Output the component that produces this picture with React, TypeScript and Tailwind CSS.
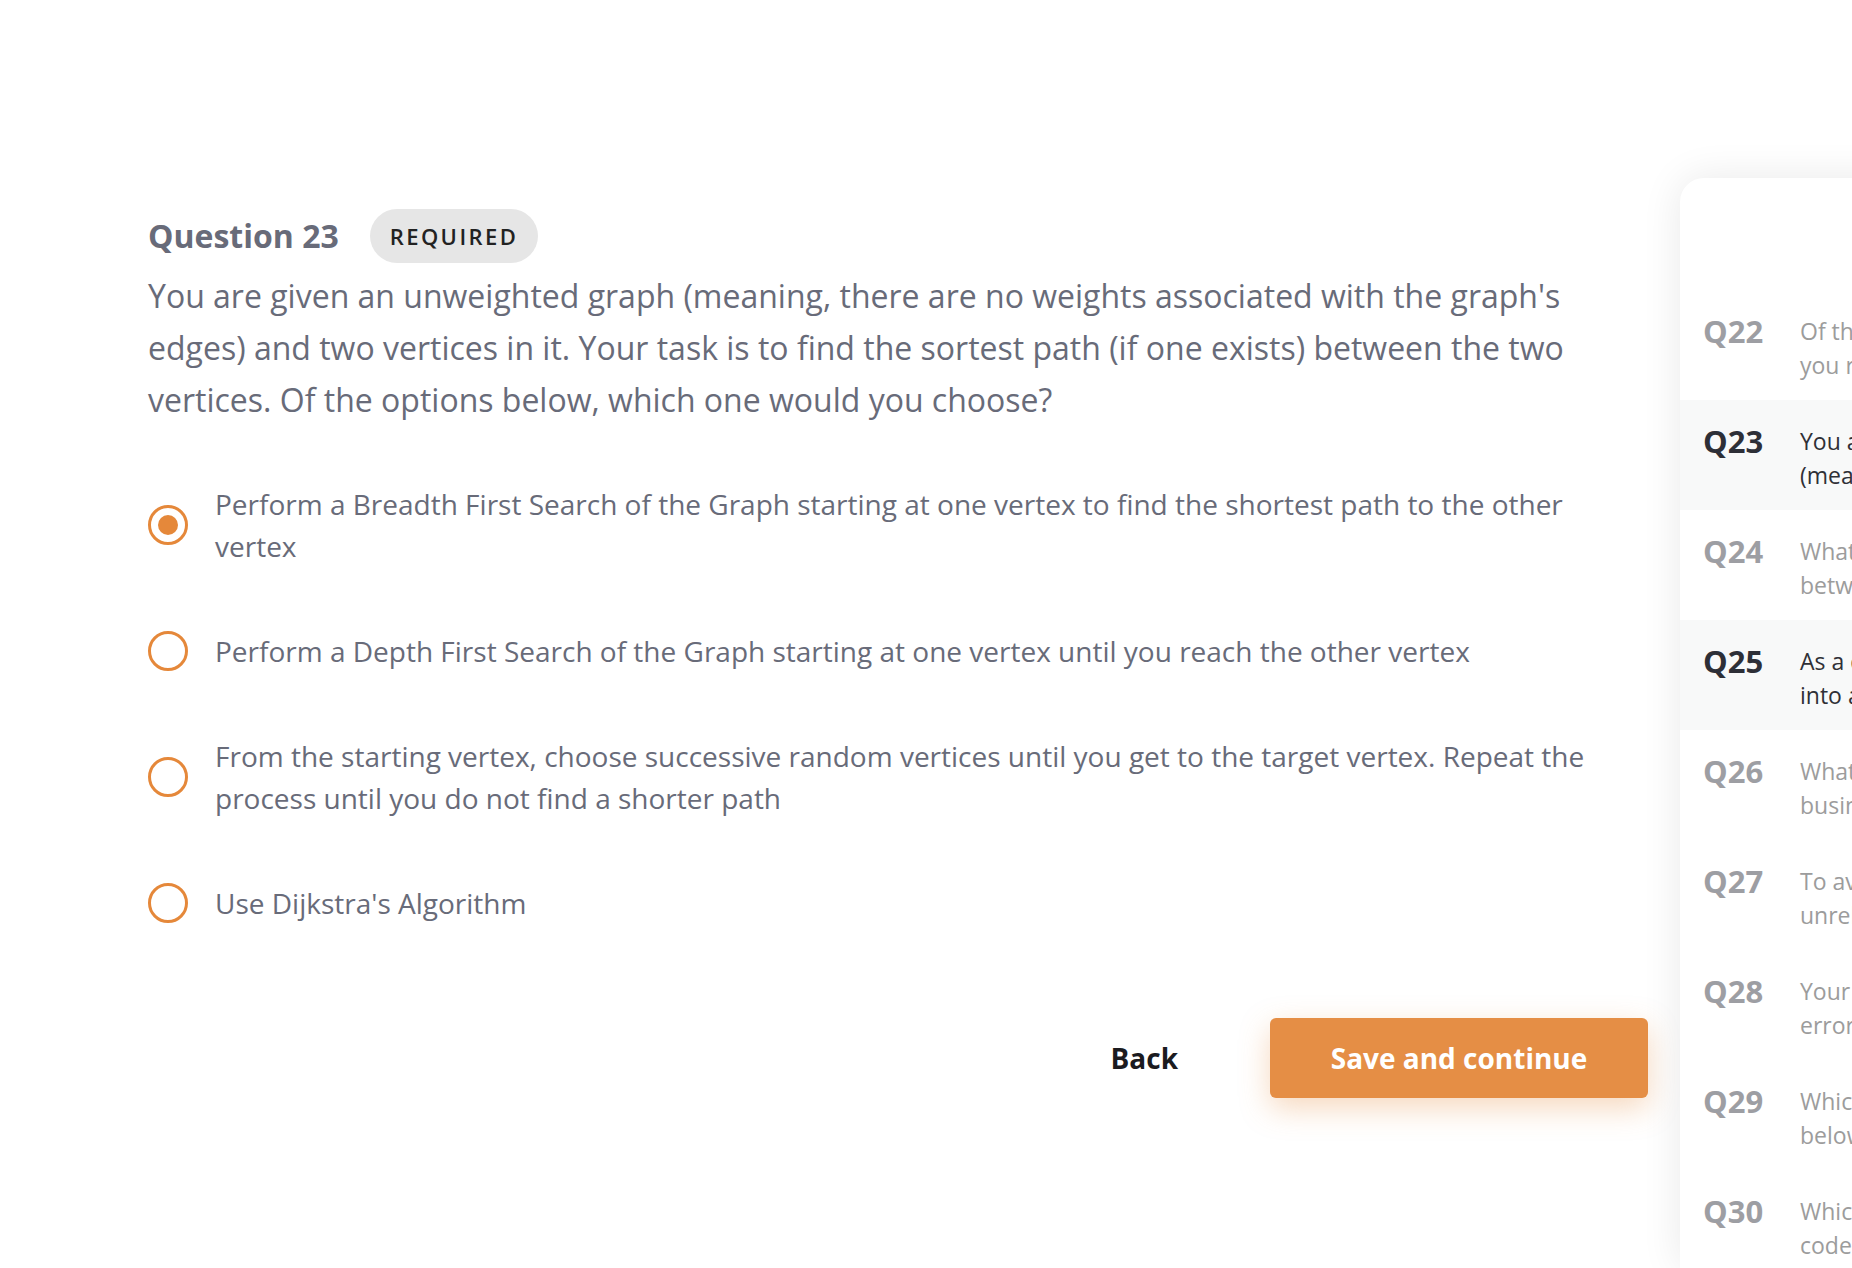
const options = [
  "Perform a Breadth First Search of the Graph starting at one vertex to find the shortest path to the other vertex",
  "Perform a Depth First Search of the Graph starting at one vertex until you reach the other vertex",
  "From the starting vertex, choose successive random vertices until you get to the target vertex. Repeat the process until you do not find a shorter path",
  "Use Dijkstra's Algorithm",
];

const questions = [
  { n: 22, l1: "Of the following approaches, which one would", l2: "you recommend to a new team member?", active: false },
  { n: 23, l1: "You are given an unweighted graph", l2: "(meaning, there are no weights associated", active: true },
  { n: 24, l1: "What is the main difference", l2: "between a process and a thread?", active: false },
  { n: 25, l1: "As a developer, you are asked to look", l2: "into a slow running query", active: true },
  { n: 26, l1: "What would you do if a critical", l2: "business requirement changes late?", active: false },
  { n: 27, l1: "To avoid a deadlock between two", l2: "unrelated services, you should", active: false },
  { n: 28, l1: "Your application throws an intermittent", l2: "error in production. What first?", active: false },
  { n: 29, l1: "Which of the data structures listed", l2: "below gives constant time lookup?", active: false },
  { n: 30, l1: "Which practice best keeps the", l2: "code base maintainable over time?", active: false },
];

function Radio({ checked }: { checked: boolean }) {
  return (
    <div className="w-[40px] h-[40px] shrink-0 rounded-full border-[3px] border-[#e5883a] flex items-center justify-center">
      {checked && <div className="w-[20px] h-[20px] rounded-full bg-[#e5883a]" />}
    </div>
  );
}

export default function App() {
  const selected = 0;

  return (
    <div className="w-[1852px] h-[1268px] overflow-hidden bg-white flex font-['Open_Sans',sans-serif]">
      <div className="w-[1500px] shrink-0 ml-[148px] pt-[209px]">
        <div className="flex items-center h-[54px]">
          <h2 className="text-[32px] font-bold text-[#686b79] leading-none">Question 23</h2>
          <span className="ml-[31px] h-[54px] px-[20px] rounded-full bg-[#e6e6e6] flex items-center text-[22px] font-semibold tracking-[0.11em] text-[#222]">
            REQUIRED
          </span>
        </div>
        <p className="mt-[7px] text-[32px] leading-[52px] text-[#686b79] pr-[70px]">
          You are given an unweighted graph (meaning, there are no weights associated with the graph's edges) and two
          vertices in it. Your task is to find the sortest path (if one exists) between the two vertices. Of the
          options below, which one would you choose?
        </p>

        <div className="mt-[57px] flex flex-col gap-[63px]">
          {options.map((o, i) => (
            <label key={i} className="flex items-center gap-[27px] cursor-pointer">
              <Radio checked={i === selected} />
              <span className="text-[28px] leading-[42px] text-[#686b79] pr-[40px]">{o}</span>
            </label>
          ))}
        </div>

        <div className="mt-[94px] flex items-center justify-end gap-[92px]">
          <button className="text-[28px] font-bold text-[#1b1b1f]">Back</button>
          <button className="w-[378px] h-[80px] rounded-[6px] bg-[#e58e45] text-white text-[28px] font-bold shadow-[0_10px_30px_rgba(229,142,69,0.35)]">
            Save and continue
          </button>
        </div>
      </div>

      <aside className="ml-[32px] mt-[178px] w-[480px] shrink-0 bg-white rounded-tl-[24px] shadow-[0_0_40px_rgba(0,0,0,0.09)] pt-[112px]">
        {questions.map((q) => (
          <div key={q.n} className={`flex h-[110px] pt-[24px] pl-[23px] ${q.active ? "bg-[#f8f9f9]" : ""}`}>
            <div className={`w-[97px] shrink-0 text-[31px] font-bold leading-[34px] ${q.active ? "text-[#2d2f37]" : "text-[#9d9ea3]"}`}>
              Q{q.n}
            </div>
            <div className={`text-[23px] leading-[34px] whitespace-nowrap ${q.active ? "text-[#2f3036]" : "text-[#9c9c9c]"}`}>
              <div>{q.l1}</div>
              <div>{q.l2}</div>
            </div>
          </div>
        ))}
      </aside>
    </div>
  );
}
